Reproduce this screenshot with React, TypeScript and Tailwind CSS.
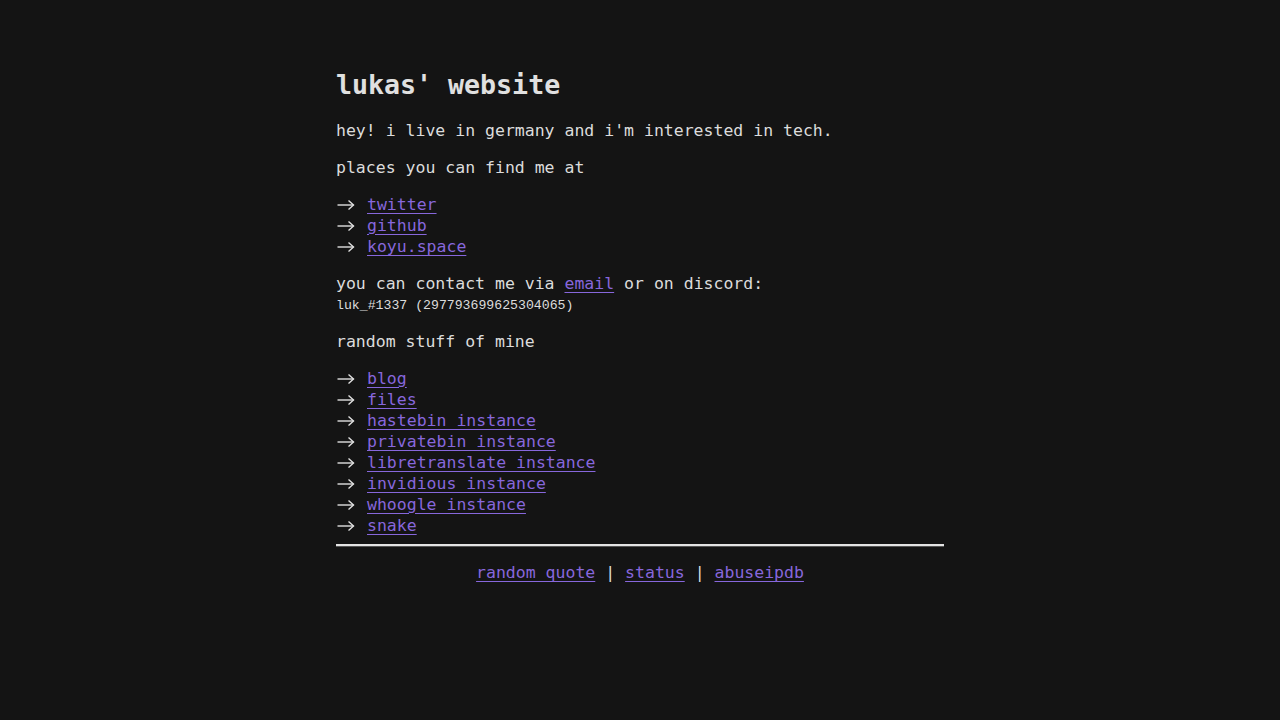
const places = [
  { label: "twitter", href: "#" },
  { label: "github", href: "#" },
  { label: "koyu.space", href: "#" },
];

const stuff = [
  "blog",
  "files",
  "hastebin instance",
  "privatebin instance",
  "libretranslate instance",
  "invidious instance",
  "whoogle instance",
  "snake",
];

function Arrow() {
  return (
    <svg className="w-[18px] h-[12px] shrink-0" viewBox="0 0 18 12" fill="none">
      <path d="M0.5 6H16.5" stroke="#e0e0e0" strokeWidth="1.4" />
      <path d="M11.5 1.5L16.5 6L11.5 10.5" stroke="#e0e0e0" strokeWidth="1.4" />
    </svg>
  );
}

function LinkList({ items }: { items: string[] }) {
  return (
    <ul className="mt-4 pl-px">
      {items.map((item) => (
        <li key={item} className="flex items-center h-[21px] leading-[21px]">
          <Arrow />
          <a href="#" className="ml-[12px] text-[#8767dc] underline underline-offset-[3px]">
            {item}
          </a>
        </li>
      ))}
    </ul>
  );
}

export default function App() {
  return (
    <div className="min-h-[720px] bg-[#141414] text-[#dcdcdc] font-['DejaVu_Sans_Mono',monospace] text-[16.5px] leading-[21px]">
      <div className="w-[608px] mx-auto pt-[69px]">
        <h1 className="text-[26.6px] leading-[32px] font-bold text-[#e0e0e0]">lukas' website</h1>

        <p className="mt-[19px]">hey! i live in germany and i'm interested in tech.</p>

        <p className="mt-4">places you can find me at</p>
        <LinkList items={places.map((p) => p.label)} />

        <p className="mt-4">
          you can contact me via{" "}
          <a href="#" className="text-[#8767dc] underline underline-offset-[3px]">email</a>{" "}
          or on discord:
        </p>
        <code className="block mt-px text-[13.2px] leading-[21px]">luk_#1337 (297793699625304065)</code>

        <p className="mt-[15px]">random stuff of mine</p>
        <LinkList items={stuff} />

        <hr className="mt-2 border-0 h-[2px] bg-[#e4e4e4] shadow-[0_1px_0_#555]" />

        <footer className="mt-[16px] flex justify-center whitespace-pre">
          <a href="#" className="text-[#8767dc] underline underline-offset-[3px]">random quote</a>
          <span> | </span>
          <a href="#" className="text-[#8767dc] underline underline-offset-[3px]">status</a>
          <span> | </span>
          <a href="#" className="text-[#8767dc] underline underline-offset-[3px]">abuseipdb</a>
        </footer>
      </div>
    </div>
  );
}
